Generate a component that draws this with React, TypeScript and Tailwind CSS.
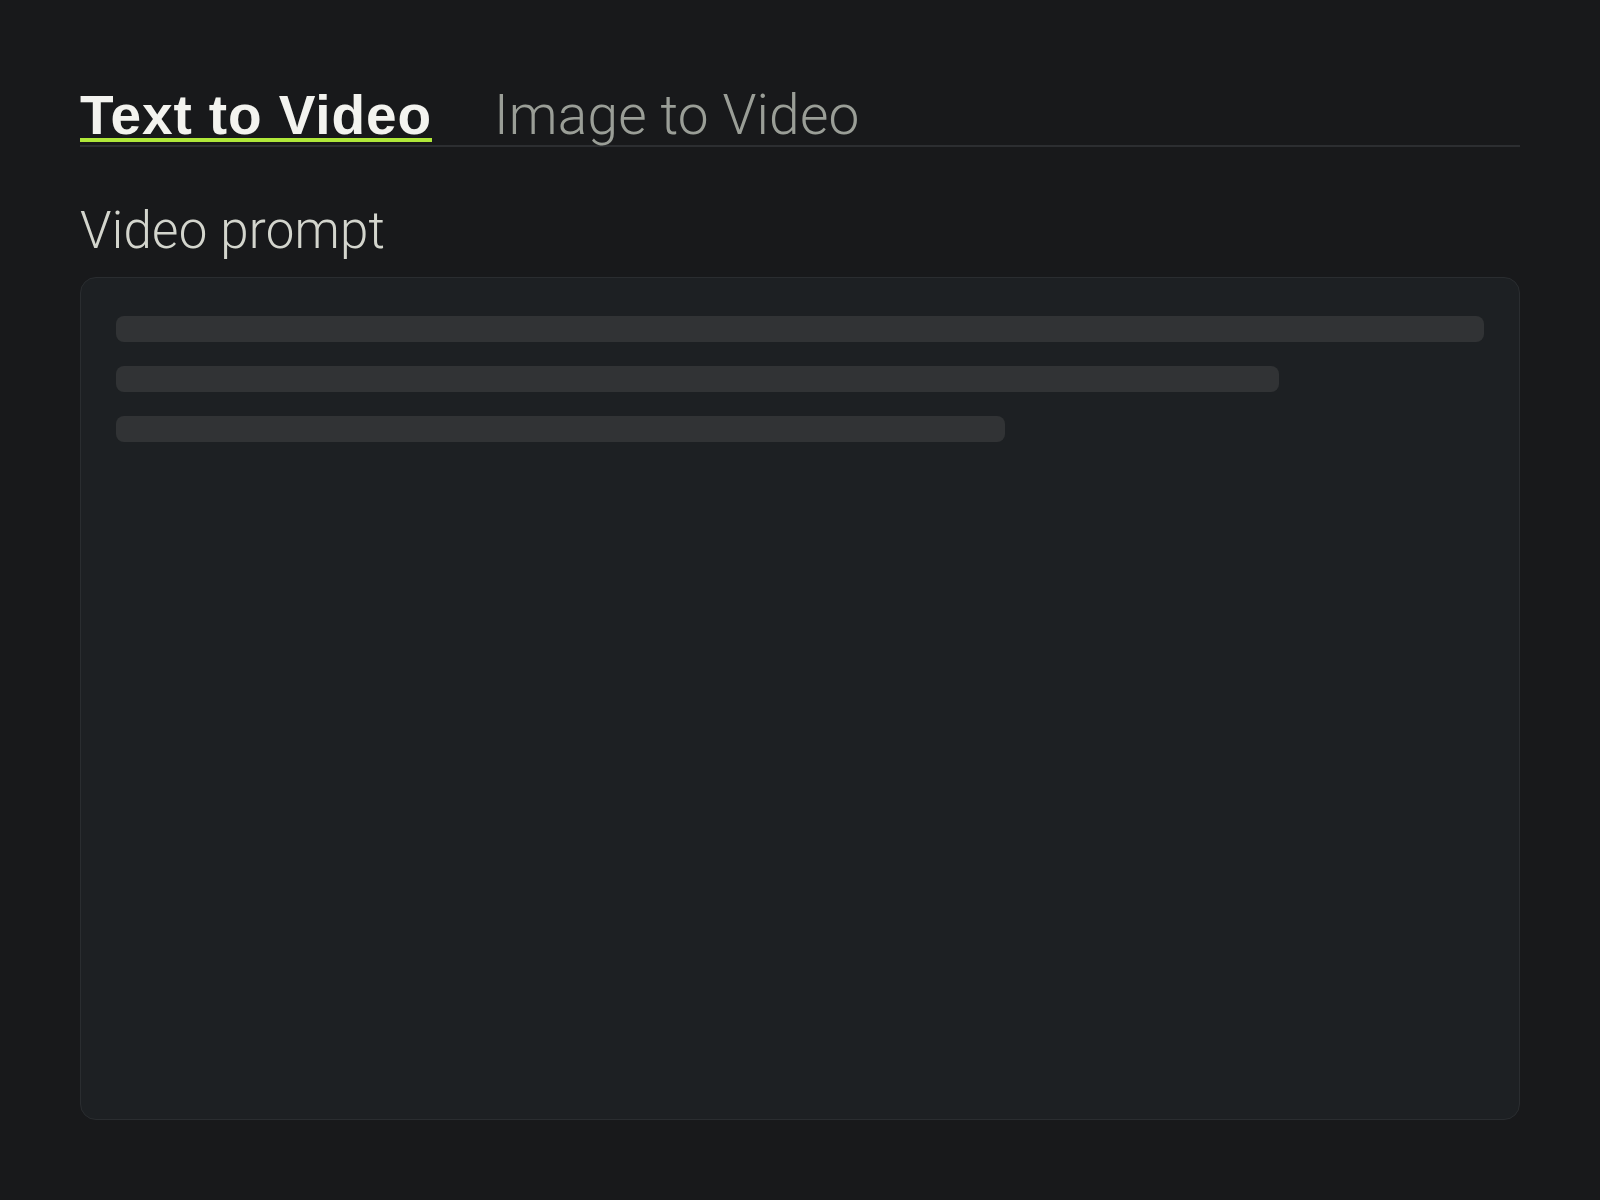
import React, { useState } from "react";

const tabs = ["Text to Video", "Image to Video"];

export default function App() {
  const [active, setActive] = useState(0);

  return (
    <div className="min-h-[1200px] w-full bg-[#18191b] px-20 pt-[92px]" style={{ fontFamily: '"Liberation Sans", Arial, sans-serif' }}>
      {/* mode tabs */}
      <div className="flex items-start gap-[62px] border-b-2 border-[#2c2e31] pb-[3px]">
        {tabs.map((t, i) =>
          i === active ? (
            <button
              key={t}
              onClick={() => setActive(i)}
              className="border-b-4 border-[#b0e83a] text-[55px] font-bold leading-[46px] tracking-[0.9px] text-[#f3f3ef]"
              style={{ fontFamily: '"Liberation Sans", Arial, sans-serif' }}
            >
              {t}
            </button>
          ) : (
            <button
              key={t}
              onClick={() => setActive(i)}
              className="border-b-4 border-transparent text-[55px] font-light leading-[46px] tracking-[0.2px] text-[#9a9e97]"
              style={{ fontFamily: 'Roboto, "Liberation Sans", sans-serif' }}
            >
              {t}
            </button>
          )
        )}
      </div>

      {/* prompt field */}
      <div
        className="mt-[54px] text-[51px] font-light leading-[60px] tracking-[0.25px] text-[#d3d5cd]"
        style={{ fontFamily: 'Roboto, "Liberation Sans", sans-serif' }}
      >
        Video prompt
      </div>
      <div className="mt-4 h-[843px] rounded-2xl border border-[#2a2d30] bg-[#1d2023] px-[35px] pt-[38px]">
        <div className="flex flex-col gap-6">
          <div className="h-[26px] w-full rounded-lg bg-[#313335]" />
          <div className="h-[26px] w-[85%] rounded-lg bg-[#313335]" />
          <div className="h-[26px] w-[65%] rounded-lg bg-[#313335]" />
        </div>
      </div>
    </div>
  );
}
